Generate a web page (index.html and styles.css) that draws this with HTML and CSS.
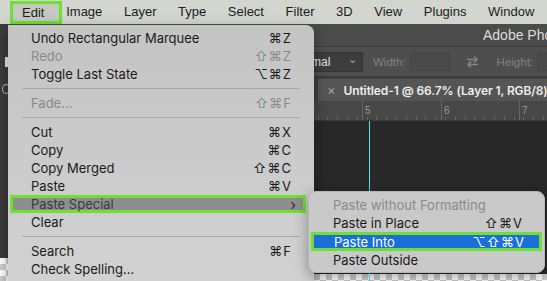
FILE: index.html
```html
<!DOCTYPE html>
<html lang="en">
<head>
  <meta charset="UTF-8" />
  <title>Edit menu</title>
  <link rel="stylesheet" href="styles.css">
</head>
<body>
  <div class="menubar">
    <span class="mb-item active">Edit</span>
    <span class="mb-item">Image</span>
    <span class="mb-item">Layer</span>
    <span class="mb-item">Type</span>
    <span class="mb-item">Select</span>
    <span class="mb-item">Filter</span>
    <span class="mb-item">3D</span>
    <span class="mb-item">View</span>
    <span class="mb-item">Plugins</span>
    <span class="mb-item">Window</span>
  </div>

  <div class="app">
    <div class="titlebar"><span>Adobe Pho</span></div>
    <div class="options">
      <div class="dropdown">mal <span class="caret">&#8964;</span></div>
      <span class="opt-label">Width:</span>
      <span class="opt-input"></span>
      <svg class="swap" width="15" height="14" viewBox="0 0 15 14">
        <path d="M2 4.5h10M9 1.5l3 3-3 3M13 9.5H3M6 6.5l-3 3 3 3" fill="none" stroke="#858585" stroke-width="1.6"/>
      </svg>
      <span class="opt-label">Height:</span>
      <span class="opt-input"></span>
    </div>
    <div class="tabs">
      <div class="tab"><span class="x">&times;</span>Untitled-1 @ 66.7% (Layer 1, RGB/8)</div>
    </div>
    <div class="ruler">
      <span class="tick t5">5</span>
      <span class="tick t6">6</span>
      <span class="tick t7">7</span>
    </div>
    <div class="canvas">
      <div class="checker"></div>
      <div class="checker right"></div>
      <div class="guide"></div>
    </div>
    <div class="toolstrip">
      <span class="tool-a"></span>
      <span class="tool-b"></span>
    </div>
  </div>

  <div class="menu main">
    <div class="row"><span>Undo Rectangular Marquee</span><span class="key">&#8984;Z</span></div>
    <div class="row dim"><span>Redo</span><span class="key">&#8679;&#8984;Z</span></div>
    <div class="row"><span>Toggle Last State</span><span class="key">&#8997;&#8984;Z</span></div>
    <div class="sep"></div>
    <div class="row dim"><span>Fade...</span><span class="key">&#8679;&#8984;F</span></div>
    <div class="sep"></div>
    <div class="row"><span>Cut</span><span class="key">&#8984;X</span></div>
    <div class="row"><span>Copy</span><span class="key">&#8984;C</span></div>
    <div class="row"><span>Copy Merged</span><span class="key">&#8679;&#8984;C</span></div>
    <div class="row"><span>Paste</span><span class="key">&#8984;V</span></div>
    <div class="row hover"><span>Paste Special</span><span class="key chev">&#8250;</span></div>
    <div class="row"><span>Clear</span><span class="key"></span></div>
    <div class="sep"></div>
    <div class="row"><span>Search</span><span class="key">&#8984;F</span></div>
    <div class="row"><span>Check Spelling...</span><span class="key"></span></div>
  </div>

  <div class="menu sub">
    <div class="row dim"><span>Paste without Formatting</span><span class="key"></span></div>
    <div class="row"><span>Paste in Place</span><span class="key">&#8679;&#8984;V</span></div>
    <div class="row selected"><span>Paste Into</span><span class="key">&#8997;&#8679;&#8984;V</span></div>
    <div class="row"><span>Paste Outside</span><span class="key"></span></div>
  </div>
</body>
</html>
```

FILE: styles.css
```css
body {
  margin: 0;
  width: 547px;
  height: 281px;
  overflow: hidden;
  position: relative;
  font-family: Inter, "Liberation Sans", sans-serif;
  background: #282828;
}

.menubar {
  height: 24px;
  display: flex;
  align-items: center;
  padding-left: 10px;
  background: #d2d6ce;
  color: #1c1c1c;
  font-family: "Liberation Sans", Arial, sans-serif;
  font-size: 13px;
  white-space: nowrap;
}

.mb-item {
  padding: 0 10.8px;
  line-height: 24px;
}

.mb-item.active {
  border: 3px solid #6ee033;
  background: #c5c9c1;
  padding: 0 15px 0 9px;
  line-height: 17px;
  margin-right: -7px;
}

.app {
  position: relative;
  height: 257px;
  display: flex;
  flex-direction: column;
}

.titlebar {
  height: 22px;
  background: #4b4b4b;
  border-bottom: 1px solid #3a3a3a;
  color: #dcdcdc;
  font-family: "Liberation Sans", Arial, sans-serif;
  font-size: 14px;
  display: flex;
  align-items: center;
  padding-left: 483px;
  white-space: nowrap;
}

.options {
  height: 29px;
  background: #4e4e4e;
  border-bottom: 1px solid #3a3a3a;
  display: flex;
  align-items: center;
  padding-left: 306px;
  color: #828282;
  font-family: "Liberation Sans", Arial, sans-serif;
  font-size: 11.5px;
  white-space: nowrap;
  overflow: hidden;
}

.options > * {
  flex-shrink: 0;
}

.dropdown {
  width: 57px;
  height: 20px;
  box-sizing: border-box;
  border: 1px solid #333;
  background: #3d3d3d;
  color: #e0e0e0;
  font-size: 12px;
  display: flex;
  align-items: center;
  justify-content: space-between;
  padding: 0 5px 0 4px;
  margin-right: 10px;
}

.caret {
  color: #aaa;
  font-size: 11px;
  margin-top: -5px;
}

.opt-label {
  margin-right: 4px;
}

.opt-input {
  width: 40px;
  height: 18px;
  box-sizing: border-box;
  border: 1px solid #444;
  background: #4a4a4a;
}

.swap {
  margin: 0 17px 0 15px;
}

.tabs {
  height: 24px;
  background: #3f3f3f;
  display: flex;
  padding-left: 318px;
  padding-top: 2px;
  box-sizing: border-box;
}

.tab {
  background: #555555;
  color: #ededed;
  font-size: 12px;
  font-weight: 600;
  letter-spacing: -0.1px;
  display: flex;
  align-items: center;
  padding-left: 9px;
  white-space: nowrap;
  flex: 1;
  overflow: hidden;
}

.tab .x {
  color: #a0a0a0;
  font-size: 13px;
  font-weight: 400;
  margin-right: 8px;
}

.ruler {
  height: 19px;
  border-bottom: 1px solid #3a3a3a;
  position: relative;
  background-color: #474747;
  background-image: repeating-linear-gradient(90deg, #666 0 1px, transparent 1px 9.8px);
  background-size: 100% 3px;
  background-repeat: no-repeat;
  background-position: 4px bottom;
}

.tick {
  position: absolute;
  top: 0;
  height: 19px;
  border-left: 1px solid #666;
  padding-left: 2px;
  font-family: "Liberation Sans", Arial, sans-serif;
  font-size: 10px;
  color: #9a9a9a;
  line-height: 19px;
}

.t5 { left: 362px; }
.t6 { left: 441px; }
.t7 { left: 519px; }

.canvas {
  flex: 1;
  background: #282828;
  position: relative;
}

.checker {
  position: absolute;
  left: 0;
  bottom: 0;
  width: 308px;
  height: 23px;
  border-top: 1px solid #5fe0e6;
  background-color: #fff;
  background-image:
    linear-gradient(45deg, #cdcdcd 25%, transparent 25%, transparent 75%, #cdcdcd 75%),
    linear-gradient(45deg, #cdcdcd 25%, transparent 25%, transparent 75%, #cdcdcd 75%);
  background-size: 12px 12px;
  background-position: 0 0, 6px 6px;
}

.checker.right {
  left: 308px;
  width: 239px;
  height: 7px;
  border-top: none;
}

.guide {
  position: absolute;
  left: 369px;
  top: 0;
  bottom: 0;
  width: 1px;
  background: #5fe0e6;
}

.toolstrip {
  position: absolute;
  left: 0;
  top: 0;
  width: 10px;
  height: 234px;
  background: #3c3c3c;
}

.tool-a {
  position: absolute;
  left: 5px;
  top: 33px;
  width: 4px;
  height: 10px;
  background: #e8e8e8;
}

.tool-b {
  position: absolute;
  left: 2px;
  top: 60px;
  width: 6px;
  height: 8px;
  border: 1.5px solid #bbb;
  border-radius: 50%;
}

.menu {
  position: absolute;
  font-size: 13px;
  color: #1a1a1a;
  border-radius: 8px;
  box-shadow: 0 4px 14px rgba(0, 0, 0, 0.35);
  white-space: nowrap;
  box-sizing: border-box;
}

.menu.main {
  left: 8px;
  top: 25px;
  width: 306px;
  height: 270px;
  padding-top: 4px;
  background: linear-gradient(to bottom, #c4c4c4, #d2d2d2);
  border-top-left-radius: 0;
}

.menu.sub {
  left: 308px;
  top: 191px;
  width: 237px;
  height: 82px;
  padding-top: 4px;
  background: #c9c9c9;
  border: 1px solid #b5b5b5;
}

.row {
  height: 18px;
  display: flex;
  align-items: center;
  justify-content: space-between;
  padding: 0 18px 0 19px;
  margin: 0 4px;
  box-sizing: border-box;
}

.sub .row {
  padding: 0 18px 0 21px;
  margin: 0 3px;
}

.row.dim {
  color: #8a8a8a;
}

.key {
  letter-spacing: 1px;
}

.row.hover {
  margin: 0 8px 0 2px;
  padding: 0 6px 0 18px;
  background: #8e8e8e;
  border: 3px solid #6ee033;
  color: #3a3a3a;
}

.chev {
  font-size: 15px;
  color: #333;
}

.row.selected {
  margin: 0 2px;
  padding: 0 14px 0 20px;
  height: 19px;
  background: #1b6fd9;
  border: 3px solid #6ee033;
  color: #fff;
}

.sep {
  height: 1px;
  background: #ababab;
  margin: 5px 14px 5px 14px;
}
```
